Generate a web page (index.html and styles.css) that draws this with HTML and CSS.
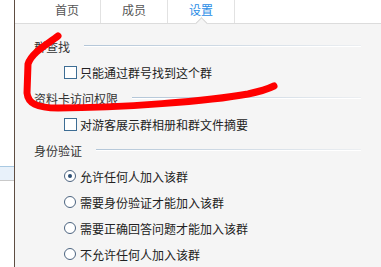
FILE: index.html
```html
<!DOCTYPE html>
<html lang="zh-CN">
<head>
<meta charset="UTF-8">
<title>群设置</title>
<link rel="stylesheet" href="styles.css">
</head>
<body>
  <aside class="side">
    <div class="side-band"></div>
  </aside>

  <main class="panel">
    <nav class="tabs">
      <div class="tab">首页</div>
      <div class="tab">成员</div>
      <div class="tab active">设置</div>
    </nav>

    <section class="settings">
      <div class="group-title"><span>群查找</span><i class="rule"></i></div>
      <label class="option"><span class="check"></span>只能通过群号找到这个群</label>

      <div class="group-title"><span>资料卡访问权限</span><i class="rule"></i></div>
      <label class="option"><span class="check"></span>对游客展示群相册和群文件摘要</label>

      <div class="group-title"><span>身份验证</span><i class="rule"></i></div>
      <label class="option"><span class="radio on"></span>允许任何人加入该群</label>
      <label class="option"><span class="radio"></span>需要身份验证才能加入该群</label>
      <label class="option"><span class="radio"></span>需要正确回答问题才能加入该群</label>
      <label class="option"><span class="radio"></span>不允许任何人加入该群</label>
    </section>
  </main>

  <!-- hand-drawn red marker on top of the screenshot -->
  <svg class="marker" width="381" height="267" viewBox="0 0 381 267">
    <path d="M58,36 C48,44 32,52 28,64 L27,93 C28,103 36,108 58,108 C120,108 210,101 248,94 C262,91 270,88 274,86"
          fill="none" stroke="#ff0000" stroke-width="7" stroke-linecap="round" stroke-linejoin="round"/>
  </svg>
</body>
</html>
```

FILE: styles.css
```css
* {
  margin: 0;
  padding: 0;
  box-sizing: border-box;
}

body {
  width: 381px;
  height: 267px;
  overflow: hidden;
  display: flex;
  position: relative;
  font-family: "Noto Sans CJK SC", "Microsoft YaHei", sans-serif;
  font-size: 12px;
  color: #222;
  background-color: #fff;
}

/* Left window strip */
.side {
  width: 15px;
  background-color: #fff;
  border-right: 1px solid #5e4d42;
  padding-top: 166px;
}

.side-band {
  height: 15px;
  background-color: #e8f1fa;
  border-top: 1px solid #a9c9e2;
  border-bottom: 1px solid #c9c9c9;
}

/* Main panel */
.panel {
  flex: 1;
  background-color: #f5f5f5;
  display: flex;
  flex-direction: column;
}

.tabs {
  height: 24px;
  display: flex;
  background-color: #fff;
  border-bottom: 1px solid #dcdcdc;
  padding-left: 19px;
}

.tab {
  width: 67px;
  height: 23px;
  line-height: 20px;
  text-align: center;
  color: #555;
  border-right: 1px solid #e2e2e2;
  position: relative;
}

.tab.active {
  color: #2a8de6;
}

.tab.active::after {
  content: '';
  position: absolute;
  left: 29px;
  bottom: -5px;
  width: 8px;
  height: 8px;
  background-color: #f5f5f5;
  border-top: 1px solid #d6d6d6;
  border-left: 1px solid #d6d6d6;
  transform: rotate(45deg);
}

.settings {
  padding-top: 9px;
}

.group-title,
.option {
  height: 26px;
  display: flex;
  align-items: center;
}

.group-title {
  padding-left: 19px;
  color: #333;
}

.rule {
  flex: 1;
  height: 1px;
  margin: 0 20px 0 14px;
  background: linear-gradient(to right, #b3c6d8, rgba(200, 214, 228, 0.2));
  box-shadow: 0 1px 0 #fff;
  position: relative;
  top: -1px;
}

.option {
  padding-left: 49px;
  color: #222;
}

.check {
  width: 13px;
  height: 13px;
  margin-right: 3px;
  background-color: #fff;
  border: 1px solid #3d6d94;
}

.radio {
  width: 12px;
  height: 12px;
  margin-right: 4px;
  border-radius: 50%;
  background-color: #fff;
  border: 1px solid #4c6480;
  display: flex;
  align-items: center;
  justify-content: center;
}

.radio.on::after {
  content: '';
  width: 4px;
  height: 4px;
  border-radius: 50%;
  background-color: #2b4e74;
}

/* Red marker overlay */
.marker {
  position: absolute;
  top: 0;
  left: 0;
  pointer-events: none;
}
```
